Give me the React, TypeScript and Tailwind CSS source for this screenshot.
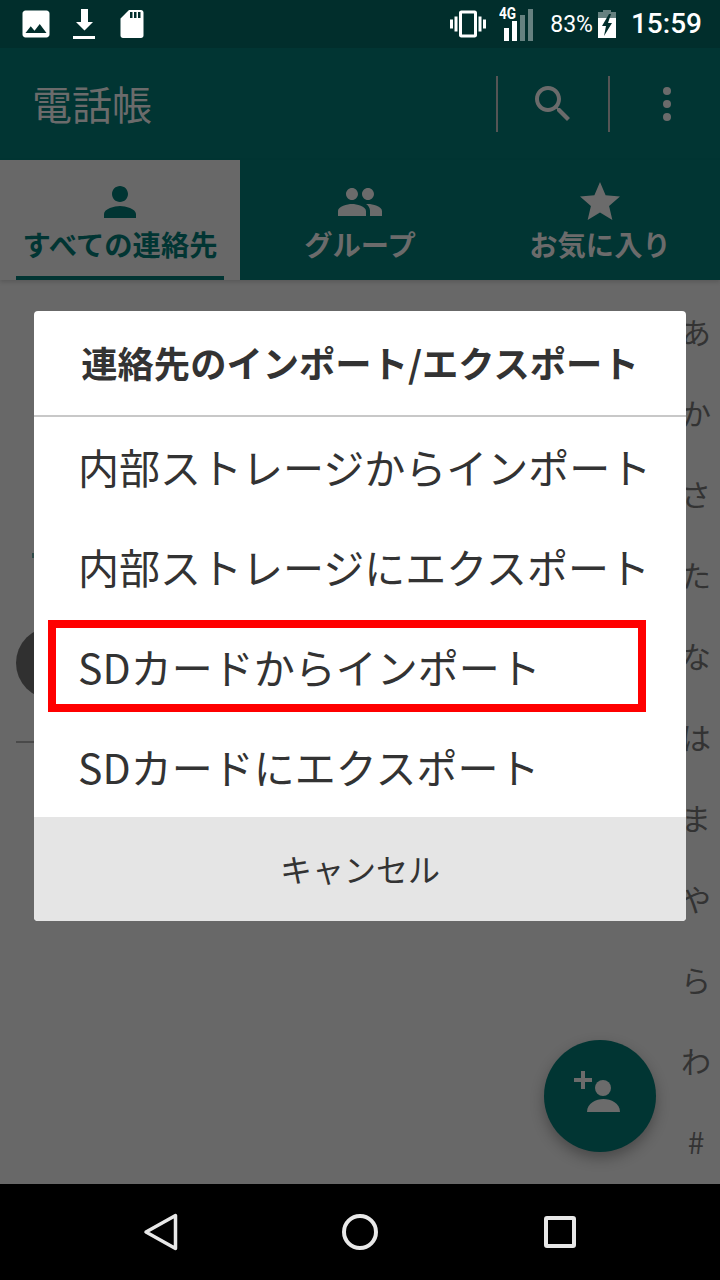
import type { ReactNode } from "react";

const CJK = "font-['Noto_Sans_CJK_JP','Noto_Sans',sans-serif]";

const INDEX_LABELS = ["あ", "か", "さ", "た", "な", "は", "ま", "や", "ら", "わ", "#"];
const MENU_ITEMS = ["内部ストレージからインポート", "内部ストレージにエクスポート", "SDカードからインポート", "SDカードにエクスポート"];

function Icon({ d, size, className }: { d: string; size: number; className?: string }) {
	return (
		<svg width={size} height={size} viewBox="0 0 24 24" fill="currentColor" className={className}>
			<path d={d} />
		</svg>
	);
}

function StatusBar() {
	return (
		<div className="h-12 shrink-0 bg-[#012e2c] flex items-center text-white">
			<div className="flex items-center pl-[18px]">
				<Icon
					size={36}
					d="M21 19V5c0-1.1-.9-2-2-2H5c-1.1 0-2 .9-2 2v14c0 1.1.9 2 2 2h14c1.1 0 2-.9 2-2zM8.5 13.5l2.5 3.01L14.5 12l4.5 6H5l3.5-4.5z"
				/>
				<svg width="22" height="32" viewBox="0 0 22 32" fill="currentColor" className="ml-[19px]">
					<path d="M8 1h7v13h5l-8.5 8.5L3 14h5zM0 28h22v3H0z" />
				</svg>
				<svg width="24" height="30" viewBox="0 0 24 30" fill="currentColor" className="ml-[25px]">
					<path d="M9 1h12c1.4 0 2.5 1 2.5 2.5v23c0 1.4-1 2.5-2.5 2.5H3c-1.4 0-2.5-1-2.5-2.5V9.5zM10 3v6h2.5V3zm4 0v6h2.500V3zm4 0v6h2.5V3z" fillRule="evenodd" />
				</svg>
			</div>
			<div className="ml-auto flex items-center pr-[18px]">
				<Icon
					size={36}
					d="M0 15h2V9H0v6zm3 2h2V7H3v10zm19-8v6h2V9h-2zm-3 8h2V7h-2v10zM16.5 3h-9C6.67 3 6 3.67 6 4.5v15c0 .83.67 1.5 1.5 1.5h9c.83 0 1.5-.67 1.5-1.5v-15c0-.83-.67-1.5-1.5-1.5zM16 19H8V5h8v14z"
				/>
				<div className="relative w-[36px] h-[34px] ml-[13px]">
					<span className="absolute left-0 top-[-3px] text-[17px] leading-[18px] font-bold font-['Roboto',sans-serif] scale-x-[0.8] origin-left">
						4G
					</span>
					<div className="absolute left-[5px] bottom-0 flex items-end gap-[3px]">
						<div className="w-[5px] h-[13px] bg-white" />
						<div className="w-[5px] h-[20px] bg-white" />
						<div className="w-[5px] h-[26px] bg-white/40" />
						<div className="w-[5px] h-[32px] bg-white/40" />
					</div>
				</div>
				<span className="ml-[15px] text-[23px] leading-none font-['Roboto',sans-serif]">83%</span>
				<svg width="20" height="28" viewBox="0 0 20 28" className="ml-[4px]">
					<path d="M6 0h8v2h5v6H1V2h5z" fill="#ffffff" fillOpacity="0.4" />
					<path d="M1 8h18v20H1z" fill="#ffffff" />
					<path d="M12 4L5 16h4l-2 10 8-13h-4l3-9z" fill="#012e2c" />
				</svg>
				<span className="ml-[14px] text-[28px] leading-none font-medium font-['Roboto',sans-serif]">15:59</span>
			</div>
		</div>
	);
}

function AppBar() {
	return (
		<div className="h-28 shrink-0 bg-[#013533] flex items-center text-[#6b6b6b]">
			<span className={`pl-[32px] pb-[2px] text-[40px] leading-none ${CJK}`}>電話帳</span>
			<div className="ml-auto flex items-center">
				<div className="w-[2px] h-14 bg-[#555]" />
				<div className="w-[110px] flex justify-center">
					<Icon
						size={48}
						d="M15.5 14h-.79l-.28-.27C15.41 12.59 16 11.11 16 9.5 16 5.91 13.09 3 9.5 3S3 5.91 3 9.5 5.91 16 9.5 16c1.61 0 3.09-.59 4.23-1.57l.27.28v.79l5 4.99L20.49 19l-4.99-5zm-6 0C7.01 14 5 11.99 5 9.5S7.01 5 9.5 5 14 7.01 14 9.5 11.99 14 9.5 14z"
					/>
				</div>
				<div className="w-[2px] h-14 bg-[#555]" />
				<div className="w-[110px] pl-[4px] flex flex-col items-center gap-[5px]">
					<div className="w-2 h-2 rounded-full bg-[#6b6b6b]" />
					<div className="w-2 h-2 rounded-full bg-[#6b6b6b]" />
					<div className="w-2 h-2 rounded-full bg-[#6b6b6b]" />
				</div>
			</div>
		</div>
	);
}

function Tab({ label, active, icon }: { label: string; active?: boolean; icon: ReactNode }) {
	return (
		<div
			className={`relative w-[240px] h-full flex flex-col items-center pt-[18px] ${
				active ? "bg-[#686868] text-[#013533]" : "bg-[#013533] text-[#6b6b6b]"
			}`}
		>
			{icon}
			<span className={`text-[28.3px] leading-[40px] font-bold mt-[-2px] ${CJK}`}>{label}</span>
			{active && <div className="absolute left-4 right-4 bottom-0 h-1 bg-[#013533]" />}
		</div>
	);
}

function TabBar() {
	return (
		<div className="relative z-10 h-[120px] shrink-0 flex shadow-[0_2px_4px_rgba(0,0,0,0.15)]">
			<Tab
				active
				label="すべての連絡先"
				icon={
					<Icon
						size={48}
						d="M12 12c2.21 0 4-1.79 4-4s-1.79-4-4-4-4 1.79-4 4 1.79 4 4 4zm0 2c-2.67 0-8 1.34-8 4v2h16v-2c0-2.66-5.33-4-8-4z"
					/>
				}
			/>
			<Tab
				label="グループ"
				icon={
					<Icon
						size={48}
						d="M16 11c1.66 0 2.99-1.34 2.99-3S17.66 5 16 5c-1.66 0-3 1.34-3 3s1.34 3 3 3zm-8 0c1.66 0 2.99-1.34 2.99-3S9.66 5 8 5C6.34 5 5 6.34 5 8s1.34 3 3 3zm0 2c-2.33 0-7 1.17-7 3.5V19h14v-2.5c0-2.33-4.67-3.5-7-3.5zm8 0c-.29 0-.62.02-.97.05 1.16.84 1.97 1.97 1.97 3.45V19h6v-2.5c0-2.33-4.67-3.5-7-3.5z"
					/>
				}
			/>
			<Tab
				label="お気に入り"
				icon={<Icon size={48} d="M12 17.27L18.18 21l-1.64-7.03L22 9.24l-7.19-.61L12 2 9.19 8.63 2 9.24l5.46 4.73L5.82 21z" />}
			/>
		</div>
	);
}

function ContactList() {
	return (
		<div className="flex-1 bg-[#686868] flex min-h-0 relative">
			<div className="flex-1 pl-4 pt-[347px]">
				<div className="w-[72px] h-[72px] rounded-full bg-[#303030]" />
				<div className="h-[2px] bg-[#4a4a4a] mt-[42px]" />
			</div>
			<div className={`w-12 flex flex-col items-center pt-[31px] text-[30px] leading-[40px] gap-[41px] text-[#333] ${CJK}`}>
				{INDEX_LABELS.map((label) => (
					<span key={label}>{label}</span>
				))}
			</div>
			<div className="absolute left-[32px] top-[273px] w-[2px] h-[5px] bg-[#2f4a48]" />
			<div className="absolute left-[544px] top-[760px] w-28 h-28 rounded-full bg-[#013533] text-[#6b6b6b] shadow-[0_6px_14px_rgba(0,0,0,0.3)] flex items-center justify-center">
				<svg width="56" height="56" viewBox="0 0 56 56" fill="currentColor">
					<path d="M2 10h7V3h4v7h7v4h-7v7H9v-7H2z" />
					<circle cx="31" cy="20" r="8" />
					<path d="M15 44c0-9 9-13 16.5-13S48 35 48 44z" />
				</svg>
			</div>
		</div>
	);
}

function NavBar() {
	return (
		<div className="h-24 shrink-0 bg-black flex items-center justify-center gap-[160px]">
			<svg width="40" height="40" viewBox="0 0 40 40" fill="none" stroke="#e8e8e8" strokeWidth="3.5" strokeLinejoin="round">
				<path d="M35.5 3.5v33L6 20z" />
			</svg>
			<div className="w-10 h-10 flex items-center justify-center">
				<div className="w-9 h-9 rounded-full border-4 border-[#e8e8e8]" />
			</div>
			<div className="w-10 h-10 flex items-center justify-center">
				<div className="w-8 h-8 rounded-[3px] border-4 border-[#e8e8e8]" />
			</div>
		</div>
	);
}

function ImportDialog() {
	return (
		<div className={`absolute left-[34px] top-[311px] w-[652px] rounded bg-white overflow-hidden text-[#333] ${CJK}`}>
			<div className="h-[106px] pb-[2px] border-b-2 border-[#c8c8c8] flex items-center justify-center text-[36.3px] font-bold leading-none">
				連絡先のインポート/エクスポート
			</div>
			{MENU_ITEMS.map((item) => (
				<div key={item} className="h-[100px] pb-[2px] flex items-center pl-[44px] text-[41px] leading-none whitespace-nowrap">
					{item}
				</div>
			))}
			<div className="h-[104px] pb-[3px] bg-[#e5e5e5] flex items-center justify-center text-[32px] leading-none">キャンセル</div>
		</div>
	);
}

export default function App() {
	return (
		<div className="relative w-[720px] h-[1280px] flex flex-col overflow-hidden bg-[#686868]">
			<StatusBar />
			<AppBar />
			<TabBar />
			<ContactList />
			<NavBar />
			<ImportDialog />
			<div className="absolute left-[48px] top-[620px] w-[598px] h-[92px] border-8 border-[#ff0000]" />
		</div>
	);
}
